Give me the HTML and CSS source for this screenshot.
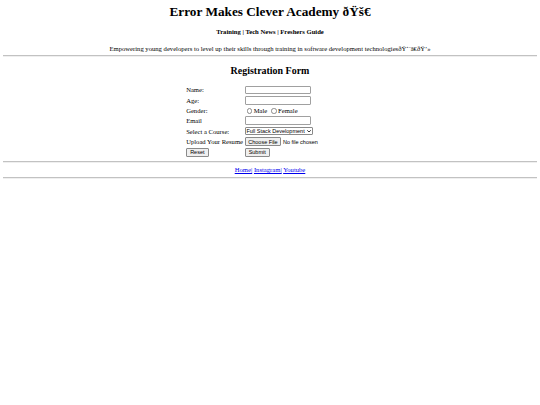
FILE: index.html
```html
<!DOCTYPE html>
<html lang="en">
<head>
<meta charset="utf-8">
<title>Error Makes Clever Academy</title>
<link rel="stylesheet" href="styles.css">
</head>
<body>
<header class="site-header">
  <h1 class="title">Error Makes Clever Academy ðŸš€</h1>
  <p class="nav"><b>Training | Tech News | Freshers Guide</b></p>
  <p class="tagline">Empowering young developers to level up their skills through training in software development technologiesðŸ‘¨â€ðŸ’»</p>
</header>
<hr class="rule">
<main>
  <h2 class="form-title">Registration Form</h2>
  <form class="reg-form">
    <label class="cell" for="name">Name:</label>
    <div class="cell"><input class="text" id="name" type="text"></div>
    <label class="cell" for="age">Age:</label>
    <div class="cell"><input class="text" id="age" type="text"></div>
    <span class="cell">Gender:</span>
    <div class="cell"><input class="radio" type="radio" name="g" id="m"><label for="m">Male</label><span class="sp"></span><input class="radio" type="radio" name="g" id="f"><label for="f">Female</label></div>
    <label class="cell" for="email">Email</label>
    <div class="cell"><input class="text" id="email" type="text"></div>
    <label class="cell" for="course">Select a Course:</label>
    <div class="cell">
      <span class="select-wrap">
        <select class="select" id="course"><option>Full Stack Development</option></select>
        <svg class="chev" viewBox="0 0 8 5" width="4" height="2.6"><path d="M1 1 L4 4 L7 1" fill="none" stroke="#000" stroke-width="1.6" stroke-linecap="round" stroke-linejoin="round"/></svg>
      </span>
    </div>
    <label class="cell" for="resume">Upload Your Resume</label>
    <div class="cell"><input class="file" id="resume" type="file"></div>
    <div class="cell"><button class="btn" type="reset">Reset</button></div>
    <div class="cell"><button class="btn" type="button">Submit</button></div>
  </form>
</main>
<hr class="rule">
<footer class="footer"><a href="#">Home|</a> <a href="#">Instagram|</a> <a href="#">Youtube</a></footer>
<hr class="rule">
</body>
</html>
```
FILE: styles.css
```css
html {
  background: #fff;
}
body {
  margin: 3.3px;
  font-family: "Liberation Serif", "Times New Roman", serif;
  font-size: 6.64px;
  color: #000;
}
.site-header {
  text-align: center;
}
.title {
  font-size: 13.28px;
  margin: 0.8px 0 0;
}
.nav {
  margin: 7.9px 0 0;
}
.tagline {
  margin: 9.6px 0 0;
}
.rule {
  border: 0;
  border-top: 1px solid #c2c2c2;
  border-bottom: 1px solid #efefef;
  margin: 3.1px 0;
  height: 0;
}
.form-title {
  text-align: center;
  font-size: 9.96px;
  margin: 8.8px 0 7.9px;
}
.reg-form {
  width: 168.5px;
  margin: 0 auto;
  padding: 0.83px;
  display: grid;
  grid-template-columns: auto 1fr;
  gap: 0.83px;
  align-items: center;
}
.cell {
  padding: 0.4px;
  min-height: 8.7px;
  display: flex;
  align-items: center;
  white-space: nowrap;
}
.text {
  width: 66.8px;
  height: 8.7px;
  box-sizing: border-box;
  border: 1px solid #a0a0a0;
  border-radius: 1px;
  padding: 0 1px;
  margin: 0;
  font: 5.53px "Liberation Sans", Arial, sans-serif;
  background: #fff;
}
.radio {
  appearance: none;
  -webkit-appearance: none;
  width: 5.4px;
  height: 5.4px;
  box-sizing: border-box;
  border: 0.8px solid #8a8a8a;
  border-radius: 50%;
  margin: 0.6px 1.3px 0 2.4px;
  background: #fff;
}
.sp {
  width: 1.7px;
}
.select-wrap {
  display: inline-flex;
  align-items: center;
  gap: 1.5px;
  height: 7.6px;
  box-sizing: border-box;
  border: 1px solid #8a8a8a;
  border-radius: 1px;
  padding: 0 1.5px 0 0.8px;
  background: #fff;
}
.select {
  appearance: none;
  -webkit-appearance: none;
  border: 0;
  padding: 0;
  margin: 0;
  background: transparent;
  font: 5.53px "Liberation Sans", Arial, sans-serif;
  color: #000;
  line-height: 6px;
}
.chev {
  display: block;
}
.file {
  font: 5.53px "Liberation Sans", Arial, sans-serif;
  margin: 0;
  color: #000;
}
.file::file-selector-button {
  font: 5.53px "Liberation Sans", Arial, sans-serif;
  background: #efefef;
  border: 1px solid #8a8a8a;
  border-radius: 1px;
  padding: 0.5px 2.6px;
  margin: 0 1.7px 0 0;
  color: #000;
}
.btn {
  font: 5.53px "Liberation Sans", Arial, sans-serif;
  background: #efefef;
  border: 1px solid #8a8a8a;
  border-radius: 1px;
  padding: 0.5px 3px;
  margin: 0;
  color: #000;
}
.footer {
  text-align: center;
  line-height: 8.3px;
}
.footer a {
  color: #0000ee;
}
```
